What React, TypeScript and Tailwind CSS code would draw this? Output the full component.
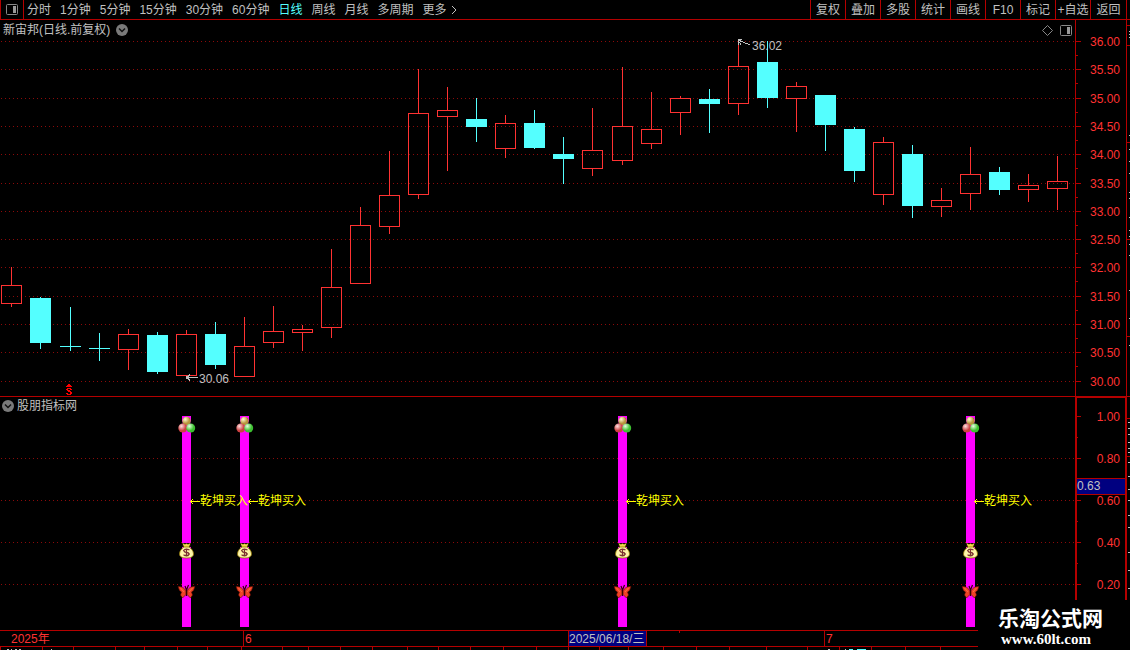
type Candle = [x: number, high: number, top: number, bottom: number, low: number, up: 0 | 1];

const PERIODS = ["分时", "1分钟", "5分钟", "15分钟", "30分钟", "60分钟", "日线", "周线", "月线", "多周期"];
const TOOLS = ["复权", "叠加", "多股", "统计", "画线", "F10", "标记", "+自选", "返回"];

const PRICES = [
  ["36.00", 41], ["35.50", 69], ["35.00", 98], ["34.50", 126], ["34.00", 154],
  ["33.50", 183], ["33.00", 211], ["32.50", 239], ["32.00", 267], ["31.50", 296],
  ["31.00", 324], ["30.50", 352], ["30.00", 381],
] as const;

const LEVELS = [["1.00", 416], ["0.80", 458], ["0.60", 500], ["0.40", 542], ["0.20", 584]] as const;

const CANDLES: Candle[] = [
  [11, 267, 285, 304, 307, 1],
  [40, 297, 298, 343, 349, 0],
  [70, 307, 346, 347, 351, 0],
  [99, 333, 348, 349, 361, 0],
  [128, 329, 334, 350, 370, 1],
  [157, 332, 335, 372, 374, 0],
  [186, 330, 334, 376, 376, 1],
  [215, 322, 334, 365, 369, 0],
  [244, 317, 346, 377, 377, 1],
  [273, 306, 331, 343, 348, 1],
  [302, 325, 329, 333, 351, 1],
  [331, 249, 287, 328, 338, 1],
  [360, 207, 225, 284, 284, 1],
  [389, 151, 195, 227, 234, 1],
  [418, 69, 113, 195, 199, 1],
  [447, 87, 110, 117, 171, 1],
  [476, 98, 119, 127, 142, 0],
  [505, 115, 123, 149, 158, 1],
  [534, 110, 123, 148, 149, 0],
  [563, 137, 154, 159, 184, 0],
  [592, 108, 150, 169, 176, 1],
  [622, 67, 126, 161, 165, 1],
  [651, 92, 129, 144, 149, 1],
  [680, 96, 98, 113, 135, 1],
  [709, 89, 99, 104, 133, 0],
  [738, 40, 66, 104, 115, 1],
  [767, 41, 62, 98, 108, 0],
  [796, 82, 86, 99, 132, 1],
  [825, 95, 95, 125, 151, 0],
  [854, 127, 129, 171, 182, 0],
  [883, 137, 142, 195, 205, 1],
  [912, 145, 154, 206, 218, 0],
  [941, 188, 200, 207, 217, 1],
  [970, 147, 174, 194, 210, 1],
  [999, 167, 172, 190, 195, 0],
  [1028, 174, 185, 190, 202, 1],
  [1057, 156, 181, 189, 210, 1],
];

const SIGNALS = [186, 244, 622, 970];
const TABS = [0, 42, 73, 115, 144, 177, 207, 241, 282, 308, 340, 372, 407, 438, 470, 503, 536, 568, 599, 628, 663, 696, 729, 766, 807, 839, 871, 905, 940];

function PanelIcon({ className = "" }) {
  return (
    <svg width="12" height="11" viewBox="0 0 12 11" className={className} aria-hidden="true">
      <rect x="0.5" y="0.5" width="11" height="10" rx="1" fill="none" stroke="#888" />
      <rect x="7" y="2" width="3" height="7" fill="#999" />
    </svg>
  );
}

function Collapse({ label }: { label: string }) {
  return (
    <button aria-label={label} className="shrink-0">
      <svg width="12" height="12" viewBox="0 0 12 12" className="block">
        <circle cx="6" cy="6" r="6" fill="#7a7a7a" />
        <path d="M3 4.5 6 7.5 9 4.5" fill="none" stroke="#111" strokeWidth="1.5" />
      </svg>
    </button>
  );
}

function Stick({ c: [x, high, top, bottom, low, up] }: { c: Candle }) {
  if (!up) {
    return (
      <g fill="#54ffff">
        <rect x={x} y={high} width="1" height={low - high} />
        <rect x={x - 10} y={top} width="21" height={bottom - top} />
      </g>
    );
  }
  return (
    <g fill="#ff3232">
      <rect x={x} y={high} width="1" height={top - high} />
      <rect x={x} y={bottom} width="1" height={low - bottom} />
      <rect x={x - 9.5} y={top + 0.5} width="20" height={bottom - top - 1} fill="none" stroke="#ff3232" />
    </g>
  );
}

function Grid({ y }: { y: number }) {
  return <path d={`M1 ${y + 0.5}H1075`} stroke="#8c0a0a" strokeDasharray="1 3" />;
}

function PriceChart() {
  return (
    <svg viewBox="0 20 1130 377" className="block w-full text-[12px]" shapeRendering="crispEdges">
      {PRICES.map(([label, y], i) => (
        <g key={label}>
          <Grid y={y} />
          <rect x="1076" y={y} width="5" height="1" fill="#b40000" />
          {i < 12 && <rect x="1076" y={y + 14} width="2" height="1" fill="#b40000" />}
          <text x="1120" y={y + 5} textAnchor="end" fill="#ff3232">{label}</text>
        </g>
      ))}
      <g fill="#b40000">
        <rect x="1075" y="20" width="1" height="377" />
        <rect x="1126" y="20" width="1" height="377" />
        <rect x="0" y="396" width="1130" height="1" />
        {[25, 45, 142, 239, 336].map((y) => <rect key={y} x="1127" y={y} width="3" height="1" />)}
      </g>
      <g fill="#c0c0c0">
        {[31, 34, 37, 135, 149, 161, 173, 192, 198, 217, 230, 236, 244, 255, 290, 318, 345].map((y) => (
          <rect key={y} x="1129" y={y} width="1" height="1" />
        ))}
      </g>
      {CANDLES.map((c) => <Stick key={c[0]} c={c} />)}
      <g fill="none" stroke="#c0c0c0">
        <path d="M738 40 750 45M738 45V39.5H742M738 40 741 45" />
        <path d="M187 377.5H198M190 374.5 187 377.5 190 380.5" />
      </g>
      <rect x="186" y="376" width="2" height="3" fill="#c0c0c0" />
      <g fill="#c0c0c0">
        <text x="752" y="50">36.02</text>
        <text x="199" y="383">30.06</text>
      </g>
      <g fill="#f00">
        <path d="M68 384h2v1h1v1h1v1h-6v-1h1v-1h1z" />
        <path d="M67 388h4v1h1v1h-2v-1h-2v1h2v1h1v1h1v2h-1v1h-4v-1h-1v-1h2v1h2v-2h-2v-1h-1v-1h-1v-1h1z" />
      </g>
    </svg>
  );
}

function Balls() {
  return (
    <g shapeRendering="auto">
      <path d="M-3 2h7v3l4 4H-7l4-4Z" fill="#000" fillOpacity="0.7" />
      <circle cx="0.5" cy="5" r="4.2" fill="url(#gold)" />
      <circle cx="-3.2" cy="12" r="4.5" fill="url(#red)" />
      <circle cx="4.7" cy="12" r="4.5" fill="url(#green)" />
    </g>
  );
}

function MoneyBag() {
  return (
    <g shapeRendering="auto">
      <path d="M-4 1h9v4h-9z" fill="#1c1000" />
      <path d="M-3.500 1 -1 2.500 .5 1.500 2 2.500 4.500 1 3 5H-2Z" fill="#f0d84a" />
      <path d="M-2 5H3C5 6.500 7.500 8.500 7.500 12 7.500 14.500 5 16 .5 16S-6.500 14.500 -6.500 12C-6.500 8.500-4 6.500-2 5Z" fill="#fff6a8" stroke="#8d7300" strokeWidth="0.8" />
      <path d="M3.500 8 2 7.300H-1L-2.300 8.500 -1 10.200 2 10.700 3.200 12 2 13.500H-1L-2.500 12.700M.5 6.500V14.500" fill="none" stroke="#7b3030" strokeWidth="1.3" />
    </g>
  );
}

function Butterfly() {
  return (
    <g shapeRendering="auto" stroke="#5a0c00" strokeWidth="0.6">
      <path d="M0 6C-2 2.500-4 1.500-8 1.500L-6.500 5.500-4.500 7-5.500 10-3.500 13 0 9.500Z" fill="#ee4426" />
      <path d="M1 6C3 2.500 5 1.500 9 1.500L7.500 5.500 5.500 7 6.500 10 4.500 13 1 9.500Z" fill="#ee4426" />
      <path d="M.5 11V5L-1 1M.5 5 2.500 0" fill="none" stroke="#300" strokeWidth="1.2" />
      <path d="M-5.500 3-2 7M6.500 3 3 7" stroke="#ff8a60" />
    </g>
  );
}

function IndicatorChart() {
  return (
    <svg viewBox="0 397 1130 233" className="block w-full text-[12px]" shapeRendering="crispEdges">
      <defs>
        <radialGradient id="gold" cx="35%" cy="30%"><stop stopColor="#fffbd0" /><stop offset="1" stopColor="#b8943c" /></radialGradient>
        <radialGradient id="red" cx="35%" cy="30%"><stop stopColor="#ffe0e0" /><stop offset="1" stopColor="#cc4040" /></radialGradient>
        <radialGradient id="green" cx="35%" cy="30%"><stop stopColor="#e8ffe0" /><stop offset="1" stopColor="#3cc030" /></radialGradient>
      </defs>
      {LEVELS.map(([label, y], i) => (
        <g key={label}>
          {i > 0 && <Grid y={y} />}
          <rect x="1077" y={y} width="4" height="1" fill="#b40000" />
          {i < 4 && <rect x="1077" y={y + 21} width="1" height="1" fill="#b40000" />}
          <text x="1120" y={y + 5} textAnchor="end" fill="#ff3232">{label}</text>
        </g>
      ))}
      <g fill="#b40000">
        <rect x="1075" y="397" width="2" height="233" />
        <rect x="1125" y="397" width="2" height="233" />
        <rect x="1075" y="397" width="52" height="1" />
        <rect x="1127" y="418" width="3" height="1" />
        <rect x="1127" y="456" width="3" height="1" />
      </g>
      <g fill="#c0c0c0">
        {[422, 428, 434, 442, 448, 452, 462, 476, 489, 500, 515, 527, 552, 570, 588].map((y) => (
          <rect key={y} x="1128" y={y} width="2" height="1" />
        ))}
      </g>
      <rect x="1077" y="478" width="48" height="17" fill="#b40000" />
      <rect x="1077" y="479" width="48" height="15" fill="#000080" />
      <text x="1077" y="490" fill="#c0c0c0">0.63</text>
      {SIGNALS.map((x) => <rect key={x} x={x - 4} y="416" width="9" height="211" fill="#f0f" />)}
      {SIGNALS.map((x) => (
        <g key={x}>
          <g transform={`translate(${x} 416)`}><Balls /></g>
          <g transform={`translate(${x} 542)`}><MoneyBag /></g>
          <g transform={`translate(${x} 585)`}><Butterfly /></g>
          <g fill="#ff0">
            <rect x={x + 4} y="501" width="10" height="1" />
            <rect x={x + 5} y="500" width="1" height="3" />
            <rect x={x + 6} y="499" width="1" height="1" />
            <rect x={x + 6} y="503" width="1" height="1" />
            <text x={x + 14} y="505">乾坤买入</text>
          </g>
        </g>
      ))}
    </svg>
  );
}

export default function App() {
  return (
    <div className="relative min-h-screen overflow-hidden bg-black font-['Liberation_Sans','Noto_Sans_CJK_SC',sans-serif] text-[12px] leading-4 text-[#c0c0c0]">
      <header className="flex h-5 items-stretch justify-between border-b border-[#b40000]">
        <nav className="flex items-center gap-[9px] whitespace-nowrap">
          <button aria-label="侧栏" className="-mr-1.5 flex h-full w-6 items-center justify-center border-x border-[#b40000]">
            <PanelIcon />
          </button>
          {PERIODS.map((p) => (
            <button key={p} className={p === "日线" ? "text-[#54ffff]" : ""}>{p}</button>
          ))}
          <button className="flex items-center gap-1">
            更多
            <svg width="6" height="10" viewBox="0 0 6 10" aria-hidden="true">
              <path d="M1 1 5 5 1 9" fill="none" stroke="#c0c0c0" />
            </svg>
          </button>
        </nav>
        <div className="mr-[3px] flex whitespace-nowrap border-r border-[#b40000]">
          {TOOLS.map((t) => (
            <button key={t} className="w-[35px] border-l border-[#b40000] text-center last:w-9">{t}</button>
          ))}
        </div>
      </header>

      <section className="relative">
        <PriceChart />
        <div className="absolute inset-x-0 top-0 flex items-center gap-[6px] pt-[2px] pl-[3px] pr-[58px]">
          <h1>新宙邦(日线.前复权)</h1>
          <Collapse label="收起主图" />
          <svg width="11" height="11" viewBox="0 0 11 11" className="ml-auto" aria-hidden="true">
            <path d="M5.500 .5 10.500 5.500 5.500 10.500 .5 5.500Z" fill="none" stroke="#888" />
          </svg>
          <PanelIcon className="ml-px" />
        </div>
      </section>

      <section className="relative">
        <IndicatorChart />
        <div className="absolute top-0 left-0 flex items-center gap-[3px] pt-px pl-[2px]">
          <Collapse label="收起副图" />
          <h2>股朋指标网</h2>
        </div>
      </section>

      <div className="flex h-[17px] items-stretch border-y border-[#b40000] leading-[17px] text-[#ff3232]">
        <span className="w-[243px] pl-[11px]">2025年</span>
        <span className="w-[325px] border-l border-[#b40000] pl-px">6</span>
        <span className="w-[79px] whitespace-nowrap border-x border-[#b40000] bg-[#000080] text-[#c0c0c0]">2025/06/18/三</span>
        <span className="h-[2px] w-[33px] border-r border-[#b40000]" />
        <span className="w-[144px]" />
        <span className="border-l border-[#b40000] pl-px">7</span>
      </div>
      <svg viewBox="0 647 1130 3" className="block w-full" shapeRendering="crispEdges" aria-hidden="true">
        {TABS.map((x) => <rect key={x} x={x} y="647" width="1" height="3" fill="#b40000" />)}
        <path d="M7 649.500h2m2 0h1m3 0h2m2 0h2m30 0h1M828 649.500h2m15 0h1" stroke="#c0c0c0" />
        <path d="M849 649.500h4m4 0h9" stroke="#54ffff" />
      </svg>

      <footer className="absolute right-0 bottom-0 h-[50px] w-[152px] bg-black pt-[7px] pl-5 font-bold text-white">
        <div className="text-[21px] leading-6">乐淘公式网</div>
        <a href="/" className="block pl-[3px] font-['Liberation_Serif',serif] text-[15px] leading-4">www.60lt.com</a>
      </footer>
    </div>
  );
}
